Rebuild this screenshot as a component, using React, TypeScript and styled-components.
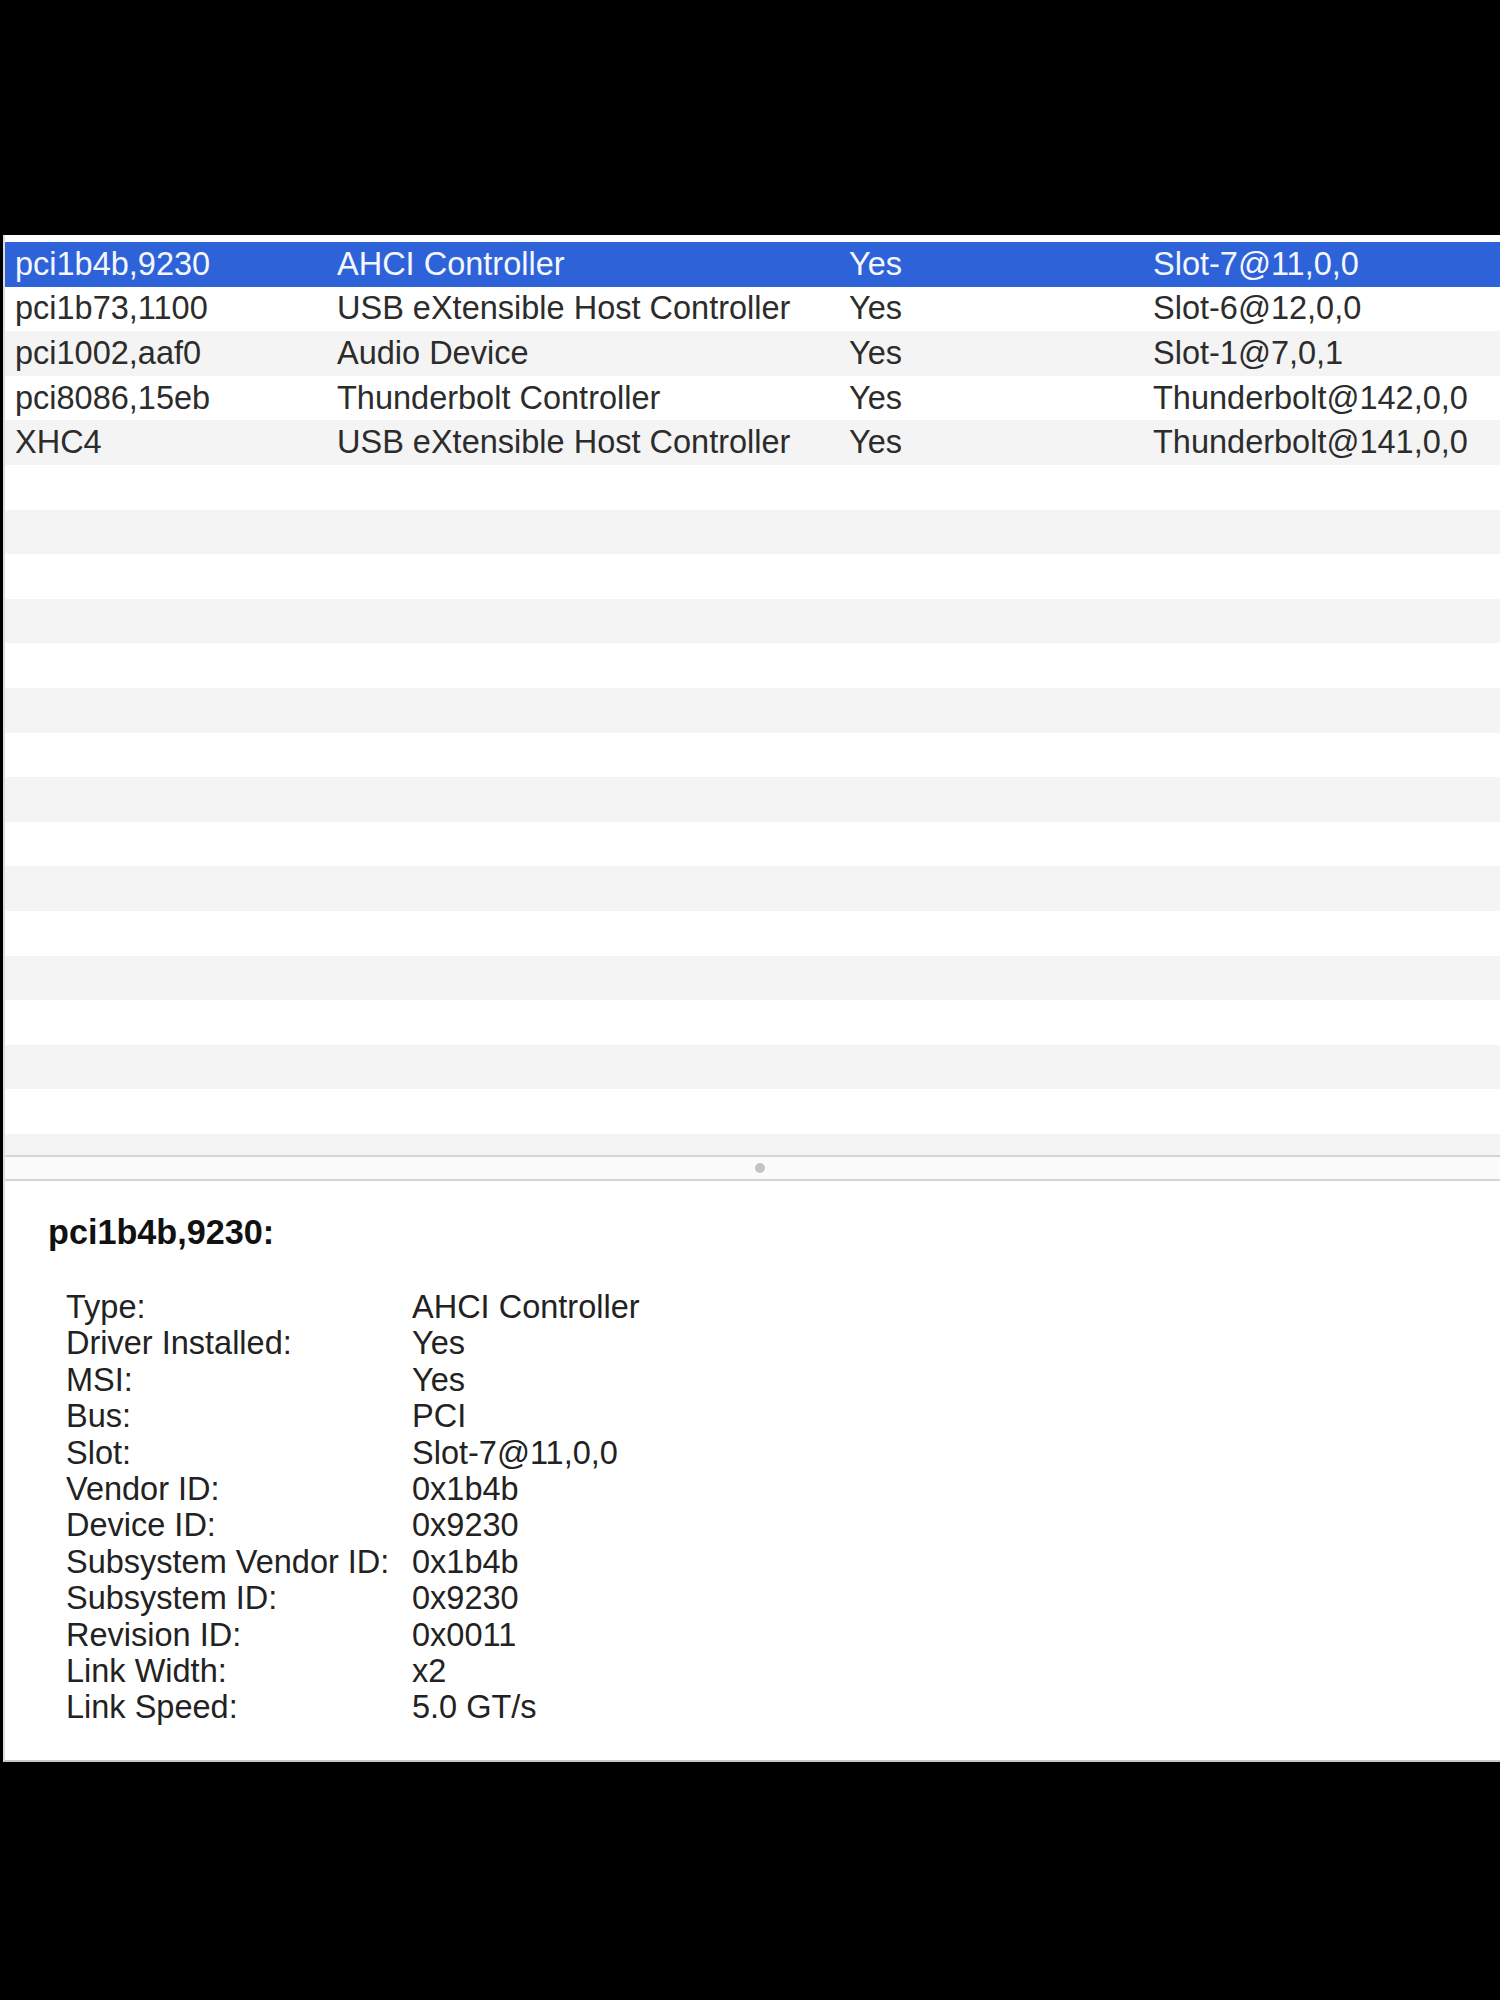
import * as React from "react";
import styled, { createGlobalStyle } from "styled-components";

type Device = {
  name: string;
  type: string;
  driver: string;
  slot: string;
};

const devices: Device[] = [
  { name: "pci1b4b,9230", type: "AHCI Controller", driver: "Yes", slot: "Slot-7@11,0,0" },
  { name: "pci1b73,1100", type: "USB eXtensible Host Controller", driver: "Yes", slot: "Slot-6@12,0,0" },
  { name: "pci1002,aaf0", type: "Audio Device", driver: "Yes", slot: "Slot-1@7,0,1" },
  { name: "pci8086,15eb", type: "Thunderbolt Controller", driver: "Yes", slot: "Thunderbolt@142,0,0" },
  { name: "XHC4", type: "USB eXtensible Host Controller", driver: "Yes", slot: "Thunderbolt@141,0,0" },
];

const details: [string, string][] = [
  ["Type:", "AHCI Controller"],
  ["Driver Installed:", "Yes"],
  ["MSI:", "Yes"],
  ["Bus:", "PCI"],
  ["Slot:", "Slot-7@11,0,0"],
  ["Vendor ID:", "0x1b4b"],
  ["Device ID:", "0x9230"],
  ["Subsystem Vendor ID:", "0x1b4b"],
  ["Subsystem ID:", "0x9230"],
  ["Revision ID:", "0x0011"],
  ["Link Width:", "x2"],
  ["Link Speed:", "5.0 GT/s"],
];

// empty striped rows below the data, enough to run past the splitter
const fillerCount = 16;

const App: React.FC = () => {
  const [selected, setSelected] = React.useState(0);
  const current = devices[selected];

  return (
    <>
      <GlobalStyle />
      <Window>
        <TableArea>
          {devices.map((d, i) => (
            <Row
              key={d.name}
              $index={i}
              $selected={i === selected}
              onClick={() => setSelected(i)}
            >
              <Cell>{d.name}</Cell>
              <Cell>{d.type}</Cell>
              <Cell>{d.driver}</Cell>
              <Cell>{d.slot}</Cell>
            </Row>
          ))}
          {Array.from({ length: fillerCount }).map((_, i) => (
            <Row key={`empty-${i}`} $index={devices.length + i} $selected={false} />
          ))}
        </TableArea>
        <Splitter>
          <Grip />
        </Splitter>
        <DetailPanel>
          <DetailTitle>{current.name}:</DetailTitle>
          <DetailList>
            {details.map(([label, value]) => (
              <React.Fragment key={label}>
                <DetailLabel>{label}</DetailLabel>
                <DetailValue>
                  {label === "Type:"
                    ? current.type
                    : label === "Slot:"
                    ? current.slot
                    : value}
                </DetailValue>
              </React.Fragment>
            ))}
          </DetailList>
        </DetailPanel>
      </Window>
    </>
  );
};

const GlobalStyle = createGlobalStyle`
  html, body {
    margin: 0;
    padding: 0;
    background: #000;
  }
  body {
    font-family: "Liberation Sans", Arial, Helvetica, sans-serif;
  }
`;

const Window = styled.main`
  margin: 235px 0 0 3px;
  padding-top: 7px;
  background: #fff;
  border-left: 2px solid #dcdcdc;
  border-bottom: 2px solid #c9c9c9;
  overflow: hidden;
`;

const TableArea = styled.section`
  height: 913px;
  overflow: hidden;
`;

const Row = styled.div<{ $index: number; $selected: boolean }>`
  display: grid;
  grid-template-columns: 322px 512px 304px 1fr;
  align-items: center;
  height: 44.6px;
  padding-left: 10px;
  font-size: 32.5px;
  color: ${(p) => (p.$selected ? "#f4f7ff" : "#2c2c2c")};
  background: ${(p) =>
    p.$selected ? "#2e62d8" : p.$index % 2 === 0 ? "#f4f4f4" : "#fff"};
  cursor: default;
`;

const Cell = styled.span`
  white-space: nowrap;
  overflow: hidden;
`;

const Splitter = styled.div`
  display: flex;
  justify-content: center;
  align-items: center;
  height: 22px;
  padding-left: 14px;
  background: #fbfbfb;
  border-top: 2px solid #d4d4d4;
  border-bottom: 2px solid #d4d4d4;
`;

const Grip = styled.span`
  width: 10px;
  height: 10px;
  border-radius: 50%;
  background: #c4c4c4;
`;

const DetailPanel = styled.section`
  height: 579px;
  padding: 31px 0 0 43px;
  box-sizing: border-box;
  color: #222;
`;

const DetailTitle = styled.h2`
  margin: 0;
  font-size: 34.2px;
  line-height: 40px;
  font-weight: 700;
  color: #111;
`;

const DetailList = styled.div`
  display: grid;
  grid-template-columns: 346px 1fr;
  margin: 37px 0 0 18px;
  font-size: 32.5px;
  line-height: 36.4px;
`;

const DetailLabel = styled.span`
  white-space: nowrap;
`;

const DetailValue = styled.span`
  white-space: nowrap;
`;

export default App;
